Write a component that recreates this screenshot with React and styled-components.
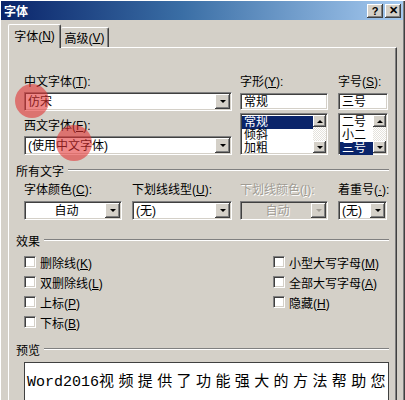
import React from 'react';
import styled, { createGlobalStyle } from 'styled-components';

const GlobalStyle = createGlobalStyle`
  html, body { margin: 0; padding: 0; background: #d4d0c8; }
  body {
    font-family: "Liberation Sans", "Noto Sans CJK SC", sans-serif;
    font-size: 12px;
    color: #000;
  }
  u { text-underline-offset: 1px; }
`;

const Window = styled.div`
  position: relative;
  width: 405px;
  height: 400px;
  box-sizing: border-box;
  overflow: hidden;
  background: #d4d0c8;
  padding: 1px 2px 0 1px;
  box-shadow: inset 1px 1px #fff, inset -1px 0 #404040, inset -2px 0 #808080;
`;

const TitleBar = styled.div`
  height: 19px;
  display: flex;
  align-items: center;
  justify-content: space-between;
  padding: 0 2px 0 3px;
  background: linear-gradient(to right, #0a246a, #3a6ea5 45%, #a6caf0);
`;

const Title = styled.span`
  color: #fff;
  font-weight: bold;
  font-size: 12px;
`;

const TitleButtons = styled.div`
  display: flex;
  gap: 2px;
`;

const TitleBtn = styled.div`
  width: 16px;
  height: 14px;
  box-sizing: border-box;
  background: #d4d0c8;
  box-shadow: inset -1px -1px #404040, inset 1px 1px #fff, inset -2px -2px #808080;
  display: flex;
  align-items: center;
  justify-content: center;
  font: bold 11px "Liberation Sans", sans-serif;
  color: #000;
`;

const Body = styled.div`
  padding: 4px 6px 0 7px;
`;

const Tabs = styled.div`
  display: flex;
  align-items: flex-end;
  height: 23px;
  position: relative;
  z-index: 1;
`;

const Tab = styled.div`
  box-sizing: border-box;
  width: ${p => p.$w}px;
  height: ${p => (p.$active ? 24 : 20)}px;
  margin-bottom: ${p => (p.$active ? -1 : 0)}px;
  display: flex;
  align-items: center;
  justify-content: center;
  background: #d4d0c8;
  border-top: 1px solid #fff;
  border-left: ${p => (p.$active ? '1px solid #fff' : 'none')};
  border-right: 1px solid #404040;
  box-shadow: inset -1px 0 #808080;
  border-radius: 2px 2px 0 0;
  padding-bottom: ${p => (p.$active ? 2 : 0)}px;
`;

const Panel = styled.div`
  box-sizing: border-box;
  height: 360px;
  padding: 0 7px;
  border-top: 1px solid #fff;
  border-left: 1px solid #fff;
  border-right: 1px solid #404040;
  box-shadow: inset -1px 0 #808080;
`;

const FontBlock = styled.div`
  display: flex;
  margin: 27px 0 0 8px;
`;

const Column = styled.div`
  display: flex;
  flex-direction: column;
  width: ${p => p.$w}px;
  margin-right: ${p => p.$gap || 0}px;
`;

const Label = styled.div`
  font-size: 12px;
  line-height: 14px;
  height: 14px;
  white-space: nowrap;
  margin-top: ${p => p.$mt || 0}px;
  color: ${p => (p.$disabled ? '#a09c94' : '#000')};
  text-shadow: ${p => (p.$disabled ? '1px 1px #fff' : 'none')};
`;

const Sunken = styled.div`
  box-sizing: border-box;
  position: relative;
  height: ${p => p.$h}px;
  margin-top: ${p => p.$mt || 0}px;
  background: ${p => (p.$disabled ? '#d4d0c8' : '#fff')};
  border: 1px solid;
  border-color: #808080 #fff #fff #808080;
  box-shadow: inset 1px 1px #404040, inset -1px -1px #d4d0c8;
  display: flex;
  align-items: stretch;
`;

const FieldText = styled.div`
  flex: 1;
  display: flex;
  align-items: center;
  justify-content: ${p => (p.$center ? 'center' : 'flex-start')};
  padding-left: 3px;
  line-height: 14px;
  white-space: nowrap;
  overflow: hidden;
  color: ${p => (p.$disabled ? '#a09c94' : '#000')};
  text-shadow: ${p => (p.$disabled ? '1px 1px #fff' : 'none')};
`;

const ArrowBtn = styled.div`
  box-sizing: border-box;
  width: ${p => p.$w || 15}px;
  height: ${p => p.$h ? `${p.$h}px` : 'auto'};
  margin: ${p => (p.$inset ? '1px 1px 1px 0' : '0')};
  background: #d4d0c8;
  box-shadow: inset -1px -1px #404040, inset 1px 1px #fff, inset -2px -2px #808080;
  display: flex;
  align-items: center;
  justify-content: center;
`;

const Arrow = styled.span`
  width: 0;
  height: 0;
  border-left: 3px solid transparent;
  border-right: 3px solid transparent;
  border-top: ${p => (p.$up ? 'none' : `3px solid ${p.$disabled ? '#a09c94' : '#000'}`)};
  border-bottom: ${p => (p.$up ? `3px solid ${p.$disabled ? '#a09c94' : '#000'}` : 'none')};
`;

const ListBox = styled(Sunken)`
  padding: 1px;
`;

const Items = styled.div`
  flex: 1;
  display: flex;
  flex-direction: column;
  padding-top: 1px;
`;

const Item = styled.div`
  height: 13px;
  line-height: 13px;
  padding-left: 2px;
  background: ${p => (p.$selected ? '#0a246a' : 'transparent')};
  color: ${p => (p.$selected ? '#fff' : '#000')};
`;

const ScrollBar = styled.div`
  width: 13px;
  display: flex;
  flex-direction: column;
`;

const Track = styled.div`
  flex: 1;
  background: repeating-conic-gradient(#fff 0 25%, #e4e2dc 0 50%) 0 0 / 2px 2px;
`;

const SectionHeader = styled.div`
  display: flex;
  align-items: center;
  height: 14px;
  margin-top: ${p => p.$mt}px;
`;

const SectionLine = styled.div`
  flex: 1;
  margin-left: 4px;
  border-top: 1px solid #808080;
  border-bottom: 1px solid #fff;
`;

const Row = styled.div`
  display: flex;
  margin-left: 8px;
  margin-top: ${p => p.$mt || 0}px;
`;

const Checks = styled.div`
  display: grid;
  grid-template-columns: 249px 1fr;
  grid-template-rows: repeat(4, 20px);
  grid-auto-flow: column;
  margin: 5px 0 0 8px;
`;

const CheckItem = styled.label`
  display: flex;
  align-items: center;
  gap: 4px;
  grid-column: ${p => p.$col};
  grid-row: ${p => p.$row};
`;

const CheckBox = styled.span`
  box-sizing: border-box;
  width: 12px;
  height: 12px;
  background: #fff;
  border: 1px solid;
  border-color: #808080 #fff #fff #808080;
  box-shadow: inset 1px 1px #404040, inset -1px -1px #d4d0c8;
`;

const Preview = styled.div`
  box-sizing: border-box;
  height: 60px;
  margin: 6px 0 0 8px;
  background: #fff;
  border: 1px solid #404040;
  padding: 7px 0 0 2px;
  overflow: hidden;
  white-space: nowrap;
  font-size: 15px;
  line-height: 20px;
`;

const Latin = styled.span`
  font-family: "Liberation Mono", monospace;
`;

const Han = styled.span`
  font-family: "Noto Sans CJK SC", sans-serif;
  letter-spacing: 4.4px;
`;

const Marker = styled.div`
  position: absolute;
  left: ${p => p.$x}px;
  top: ${p => p.$y}px;
  width: ${p => p.$d}px;
  height: ${p => p.$d}px;
  border-radius: 50%;
  background: rgba(226, 48, 48, 0.58);
  pointer-events: none;
`;

function Combo({ h = 19, mt, text, center, disabled }) {
  return (
    <Sunken $h={h} $mt={mt} $disabled={disabled}>
      <FieldText $center={center} $disabled={disabled}>{text}</FieldText>
      <ArrowBtn $inset>
        <Arrow $disabled={disabled} />
      </ArrowBtn>
    </Sunken>
  );
}

function List({ items, selected }) {
  return (
    <ListBox $h={42} $mt={3}>
      <Items>
        {items.map(it => (
          <Item key={it} $selected={it === selected}>{it}</Item>
        ))}
      </Items>
      <ScrollBar>
        <ArrowBtn $w={13} $h={12}><Arrow $up /></ArrowBtn>
        <Track />
        <ArrowBtn $w={13} $h={12}><Arrow /></ArrowBtn>
      </ScrollBar>
    </ListBox>
  );
}

function Check({ children, col, row }) {
  return (
    <CheckItem $col={col} $row={row}>
      <CheckBox />
      <span>{children}</span>
    </CheckItem>
  );
}

export default function App() {
  return (
    <>
      <GlobalStyle />
      <Window>
        <TitleBar>
          <Title>字体</Title>
          <TitleButtons>
            <TitleBtn>?</TitleBtn>
            <TitleBtn>✕</TitleBtn>
          </TitleButtons>
        </TitleBar>
        <Body>
          <Tabs>
            <Tab $active $w={53}>字体(<u>N</u>)</Tab>
            <Tab $w={48}>高级(<u>V</u>)</Tab>
          </Tabs>
          <Panel>
            <FontBlock>
              <Column $w={208} $gap={8}>
                <Label>中文字体(<u>T</u>):</Label>
                <Combo mt={3} text="仿宋" />
                <Label $mt={8}>西文字体(<u>F</u>):</Label>
                <Combo mt={3} text="(使用中文字体)" />
              </Column>
              <Column $w={88} $gap={10}>
                <Label>字形(<u>Y</u>):</Label>
                <Sunken $h={17} $mt={4}><FieldText>常规</FieldText></Sunken>
                <List items={['常规', '倾斜', '加粗']} selected="常规" />
              </Column>
              <Column $w={50}>
                <Label>字号(<u>S</u>):</Label>
                <Sunken $h={17} $mt={4}><FieldText>三号</FieldText></Sunken>
                <List items={['二号', '小二', '三号']} selected="三号" />
              </Column>
            </FontBlock>

            <SectionHeader $mt={8}>所有文字<SectionLine /></SectionHeader>
            <Row $mt={6}>
              <Column $w={98} $gap={10}>
                <Label>字体颜色(<u>C</u>):</Label>
                <Combo h={19} mt={4} text="自动" center />
              </Column>
              <Column $w={100} $gap={8}>
                <Label>下划线线型(<u>U</u>):</Label>
                <Combo h={19} mt={4} text="(无)" />
              </Column>
              <Column $w={88} $gap={10}>
                <Label $disabled>下划线颜色(<u>I</u>):</Label>
                <Combo h={19} mt={4} text="自动" center disabled />
              </Column>
              <Column $w={49}>
                <Label>着重号(<u>·</u>):</Label>
                <Combo h={19} mt={4} text="(无)" />
              </Column>
            </Row>

            <SectionHeader $mt={13}>效果<SectionLine /></SectionHeader>
            <Checks>
              <Check col={1} row={1}>删除线(<u>K</u>)</Check>
              <Check col={1} row={2}>双删除线(<u>L</u>)</Check>
              <Check col={1} row={3}>上标(<u>P</u>)</Check>
              <Check col={1} row={4}>下标(<u>B</u>)</Check>
              <Check col={2} row={1}>小型大写字母(<u>M</u>)</Check>
              <Check col={2} row={2}>全部大写字母(<u>A</u>)</Check>
              <Check col={2} row={3}>隐藏(<u>H</u>)</Check>
            </Checks>

            <SectionHeader $mt={10}>预览<SectionLine /></SectionHeader>
            <Preview>
              <Latin>Word2016</Latin>
              <Han>视频提供了功能强大的方法帮助您</Han>
            </Preview>
          </Panel>
        </Body>
        <Marker $x={15} $y={84} $d={34} />
        <Marker $x={56} $y={125} $d={36} />
      </Window>
    </>
  );
}
